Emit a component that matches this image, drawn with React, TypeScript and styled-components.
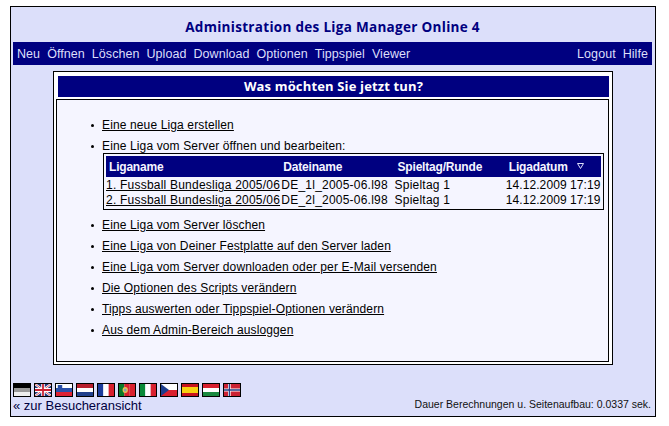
import React from 'react'
import styled, { createGlobalStyle } from 'styled-components'

const Global = createGlobalStyle`
  html, body {
    margin: 0;
    padding: 0;
    background: #fff;
  }
  body {
    font-family: "Liberation Sans", Arial, sans-serif;
    font-size: 12px;
    color: #000;
  }
`

const Page = styled.div`
  box-sizing: border-box;
  width: 646px;
  height: 411px;
  margin: 6px 0 0 10px;
  padding: 0 3px 0 2px;
  border: 1px solid #000;
  background: #dcdffa;
  display: flex;
  flex-direction: column;
`

const Title = styled.h1`
  margin: 0;
  height: 35px;
  line-height: 40px;
  text-align: center;
  font-family: "Open Sans", Verdana, sans-serif;
  font-size: 13.5px;
  font-weight: 700;
  letter-spacing: 0.3px;
  color: #000080;
`

const Nav = styled.div`
  height: 23px;
  background: #000080;
  display: flex;
  justify-content: space-between;
  align-items: center;
  padding: 0 4px;
`

const NavGroup = styled.div`
  display: flex;
  gap: 7px;
`

const NavItem = styled.a`
  color: #dcdffa;
  font-size: 12.5px;
  letter-spacing: 0.06px;
`

const Panel = styled.div`
  box-sizing: border-box;
  width: 560px;
  height: 294px;
  margin: 6px 0 0 40px;
  padding: 4px 3px 2px 2px;
  border: 1px solid #000;
  background: #fff;
  display: flex;
  flex-direction: column;
`

const PanelTitle = styled.div`
  height: 21px;
  margin: 0 0 2px 2px;
  line-height: 21px;
  background: #000080;
  color: #fff;
  text-align: center;
  font-family: "Open Sans", Verdana, sans-serif;
  font-size: 13px;
  font-weight: 700;
  letter-spacing: 0.15px;
`

const PanelBody = styled.div`
  flex: 1;
  border: 1px solid #000;
  background: #f5f5ff;
  padding-top: 18px;
`

const Menu = styled.ul`
  list-style: none;
  margin: 0;
  padding: 0 0 0 34px;
`

const MenuItem = styled.li`
  position: relative;
  padding-left: 11px;
  margin-bottom: 7px;
  line-height: 14px;
  letter-spacing: 0.13px;
  &::before {
    content: '';
    position: absolute;
    left: 0;
    top: 6px;
    width: 3px;
    height: 3px;
    border-radius: 50%;
    background: #000;
  }
`

const MenuLink = styled.a`
  color: #000;
  text-decoration: underline;
`

const Table = styled.table`
  box-sizing: border-box;
  border-collapse: separate;
  border-spacing: 0;
  border: 1px solid #000;
  padding: 2px;
  margin: 0 0 8px 1px;
  width: 501px;
  table-layout: fixed;
`

const Th = styled.th<{ $w: number; $pad: number }>`
  box-sizing: border-box;
  width: ${(p) => p.$w}px;
  background: #000080;
  color: #f5f5ff;
  text-align: left;
  padding: 0 0 0 ${(p) => p.$pad}px;
  height: 21px;
  font-size: 12px;
  letter-spacing: -0.2px;
`

const Td = styled.td<{ $pad?: number; $spacing?: number }>`
  box-sizing: border-box;
  padding: 1px 0 0 ${(p) => p.$pad ?? 0}px;
  height: 15px;
  line-height: 14px;
  letter-spacing: ${(p) => p.$spacing ?? 0.22}px;
  white-space: nowrap;
  overflow: visible;
`

const SortMark = styled.svg`
  margin-left: 9px;
  vertical-align: 2px;
`

const Footer = styled.div`
  margin-top: auto;
  display: flex;
  justify-content: space-between;
  align-items: flex-end;
  padding-bottom: 3px;
`

const FooterLeft = styled.div`
  display: flex;
  flex-direction: column;
`

const Flags = styled.div`
  display: flex;
  gap: 3px;
  margin-bottom: 1px;
`

const FlagBox = styled.svg`
  display: block;
  border: 1px solid #000;
`

const BackLink = styled.a`
  font-size: 13px;
  line-height: 15px;
  color: #000040;
`

const Timing = styled.div`
  font-size: 10.5px;
  line-height: 12px;
  color: #111;
  padding: 0 1px 3px 0;
`

const stripes = (c: string[]) =>
  c.map((f, i) => <rect key={i} x={0} y={(i * 12) / c.length} width={18} height={12 / c.length} fill={f} />)
const bars = (c: string[]) =>
  c.map((f, i) => <rect key={i} x={(i * 18) / c.length} y={0} width={18 / c.length} height={12} fill={f} />)

const flags: React.ReactNode[] = [
  stripes(['#000', '#999', '#eee']),
  <>
    <rect width={18} height={12} fill="#223a80" />
    <path d="M0 0 18 12M18 0 0 12" stroke="#fff" strokeWidth={2.4} />
    <path d="M0 0 18 12M18 0 0 12" stroke="#cc2233" strokeWidth={0.8} />
    <path d="M9 0V12M0 6H18" stroke="#fff" strokeWidth={4} />
    <path d="M9 0V12M0 6H18" stroke="#cc2233" strokeWidth={2} />
  </>,
  <>
    {stripes(['#fff', '#2a4fa8', '#dd2233'])}
    <rect x={2} y={1} width={5} height={5} fill="#2a4fa8" />
  </>,
  stripes(['#b8202e', '#fff', '#22408c']),
  bars(['#1c3c9c', '#fff', '#d8202e']),
  <>
    {bars(['#0a7a28', '#d8202e', '#d8202e'])}
    <circle cx={7} cy={6} r={3} fill="#e8c050" />
    <circle cx={7} cy={6} r={1.6} fill="#8898b8" />
  </>,
  bars(['#0a8a38', '#fff', '#d8202e']),
  <>
    {stripes(['#fff', '#d8202e'])}
    <path d="M0 0 9 6 0 12Z" fill="#1c3c8c" />
  </>,
  <>
    <rect width={18} height={12} fill="#c8141e" />
    <rect y={3} width={18} height={6} fill="#f8d010" />
  </>,
  stripes(['#d8202e', '#fff', '#1a8a40']),
  <>
    <rect width={18} height={12} fill="#cc2233" />
    <path d="M6 0V12M0 6H18" stroke="#fff" strokeWidth={3} />
    <path d="M6 0V12M0 6H18" stroke="#223a80" strokeWidth={1.4} />
  </>,
]

const leftNav = ['Neu', 'Öffnen', 'Löschen', 'Upload', 'Download', 'Optionen', 'Tippspiel', 'Viewer']

const before = ['Eine neue Liga erstellen']
const after = [
  'Eine Liga vom Server löschen',
  'Eine Liga von Deiner Festplatte auf den Server laden',
  'Eine Liga vom Server downloaden oder per E-Mail versenden',
  'Die Optionen des Scripts verändern',
  'Tipps auswerten oder Tippspiel-Optionen verändern',
  'Aus dem Admin-Bereich ausloggen',
]

const rows = [
  ['1. Fussball Bundesliga 2005/06', 'DE_1l_2005-06.l98'],
  ['2. Fussball Bundesliga 2005/06', 'DE_2l_2005-06.l98'],
]

export default function App() {
  return (
    <>
      <Global />
      <Page>
        <Title>Administration des Liga Manager Online 4</Title>
        <Nav>
          <NavGroup>
            {leftNav.map((n) => (
              <NavItem key={n}>{n}</NavItem>
            ))}
          </NavGroup>
          <NavGroup>
            <NavItem>Logout</NavItem>
            <NavItem>Hilfe</NavItem>
          </NavGroup>
        </Nav>
        <Panel>
          <PanelTitle>Was möchten Sie jetzt tun?</PanelTitle>
          <PanelBody>
            <Menu>
              {before.map((t) => (
                <MenuItem key={t}>
                  <MenuLink>{t}</MenuLink>
                </MenuItem>
              ))}
              <MenuItem>
                Eine Liga vom Server öffnen und bearbeiten:
                <Table>
                  <thead>
                    <tr>
                      <Th $w={175} $pad={3}>Liganame</Th>
                      <Th $w={112} $pad={2}>Dateiname</Th>
                      <Th $w={112} $pad={4}>Spieltag/Runde</Th>
                      <Th $w={95} $pad={3}>
                        Ligadatum
                        <SortMark width={7} height={6} viewBox="0 0 7 6">
                          <path d="M.5.5h6L3.5 5.5Z" fill="none" stroke="#dcdffa" />
                        </SortMark>
                      </Th>
                    </tr>
                  </thead>
                  <tbody>
                    {rows.map(([name, file]) => (
                      <tr key={file}>
                        <Td>
                          <MenuLink>{name}</MenuLink>
                        </Td>
                        <Td>{file}</Td>
                        <Td $pad={1}>Spieltag 1</Td>
                        <Td $spacing={0.08}>14.12.2009 17:19</Td>
                      </tr>
                    ))}
                  </tbody>
                </Table>
              </MenuItem>
              {after.map((t) => (
                <MenuItem key={t}>
                  <MenuLink>{t}</MenuLink>
                </MenuItem>
              ))}
            </Menu>
          </PanelBody>
        </Panel>
        <Footer>
          <FooterLeft>
            <Flags>
              {flags.map((f, i) => (
                <FlagBox key={i} width={16} height={12} viewBox="0 0 18 12" preserveAspectRatio="none">
                  {f}
                </FlagBox>
              ))}
            </Flags>
            <BackLink>« zur Besucheransicht</BackLink>
          </FooterLeft>
          <Timing>Dauer Berechnungen u. Seitenaufbau: 0.0337 sek.</Timing>
        </Footer>
      </Page>
    </>
  )
}
